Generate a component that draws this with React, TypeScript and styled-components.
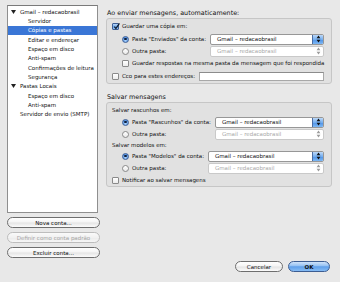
import React from 'react';
import styled, { createGlobalStyle, css } from 'styled-components';

const GlobalStyle = createGlobalStyle`
  html, body { margin: 0; padding: 0; background: #e8e8e8; }
  body { font-family: "DejaVu Sans", "Liberation Sans", sans-serif; }
`;

const Window = styled.div`
  width: 340px;
  height: 282px;
  display: flex;
  background: #e8e8e8;
  overflow: hidden;
  font-size: 5.5px;
  color: #111;
`;

const Sidebar = styled.div`
  width: 93px;
  margin-left: 7px;
  padding-top: 5px;
  display: flex;
  flex-direction: column;
  gap: 4px;
`;

const AccountList = styled.div`
  width: 91px;
  height: 208px;
  box-sizing: border-box;
  background: #fff;
  border: 1px solid #8f8f8f;
  border-top-color: #7a7a7a;
  padding-top: 1px;
`;

const TreeRow = styled.div<{ $level: number; $selected?: boolean; $toggle?: boolean }>`
  height: 9.33px;
  display: flex;
  align-items: center;
  gap: 4px;
  padding-left: ${(p) => (p.$level === 1 ? 20 : p.$toggle ? 3 : 12)}px;
  white-space: nowrap;
  color: ${(p) => (p.$selected ? '#fff' : '#111')};
  background: ${(p) => (p.$selected ? '#3a76d6' : 'transparent')};
`;

const PushButton = styled.div<{ $variant?: 'default' | 'disabled' | 'plain'; $w?: number }>`
  height: 11px;
  box-sizing: border-box;
  width: ${(p) => (p.$w ? `${p.$w}px` : '100%')};
  border-radius: 6px;
  display: flex;
  align-items: center;
  justify-content: center;
  font-size: 5.5px;
  white-space: nowrap;
  border: 1px solid #6e6e6e;
  background: linear-gradient(#ffffff, #f4f4f4 48%, #e4e4e4 52%, #fbfbfb);
  color: #111;
  ${(p) =>
    p.$variant === 'disabled' &&
    css`
      border-color: #bdbdbd;
      color: #a6a6a6;
      background: linear-gradient(#fafafa, #f1f1f1 50%, #ebebeb 52%, #f6f6f6);
    `}
  ${(p) =>
    p.$variant === 'default' &&
    css`
      border-color: #3c5d92;
      background: linear-gradient(#cfe3fa, #93c0f3 45%, #5f9fea 52%, #86bcf5);
      font-weight: bold;
    `}
`;

const Main = styled.div`
  width: 226px;
  margin-left: 6px;
  padding-top: 8px;
  display: flex;
  flex-direction: column;
`;

const SectionTitle = styled.div<{ $mt?: number }>`
  height: 10px;
  line-height: 10px;
  font-size: 6.4px;
  padding-left: 1px;
  margin-top: ${(p) => p.$mt ?? 0}px;
  white-space: nowrap;
`;

const Group = styled.div`
  box-sizing: border-box;
  border: 1px solid #c6c6c6;
  border-radius: 3px;
  background: #e1e1e1;
  padding: 2px 7px 1px 5px;
  display: flex;
  flex-direction: column;
`;

const Line = styled.div<{ $h: number; $indent?: number; $mt?: number }>`
  height: ${(p) => p.$h}px;
  margin-top: ${(p) => p.$mt ?? 0}px;
  padding-left: ${(p) => p.$indent ?? 0}px;
  display: flex;
  align-items: center;
  gap: 3px;
  white-space: nowrap;
`;

const ChoiceGrid = styled.div<{ $mt?: number }>`
  display: grid;
  grid-template-columns: auto 1fr;
  grid-auto-rows: 12px;
  column-gap: 4px;
  align-items: center;
  padding-left: 10px;
  margin-top: ${(p) => p.$mt ?? 0}px;
`;

const Choice = styled.label`
  display: flex;
  align-items: center;
  gap: 3px;
  white-space: nowrap;
`;

const Box = styled.span<{ $checked?: boolean }>`
  width: 7px;
  height: 7px;
  box-sizing: border-box;
  flex: none;
  border-radius: 1px;
  position: relative;
  border: 1px solid #8a8a8a;
  background: linear-gradient(#ffffff, #ececec);
  ${(p) =>
    p.$checked &&
    css`
      border-color: #3e5f95;
      background: linear-gradient(#b9d6f7, #6ea8ec 55%, #8cc0f6);
    `}
  svg { position: absolute; left: 0; top: -1px; overflow: visible; }
`;

const RadioDot = styled.span<{ $checked?: boolean }>`
  width: 7px;
  height: 7px;
  box-sizing: border-box;
  flex: none;
  border-radius: 50%;
  display: flex;
  align-items: center;
  justify-content: center;
  border: 1px solid #8a8a8a;
  background: linear-gradient(#ffffff, #e9e9e9);
  ${(p) =>
    p.$checked &&
    css`
      border-color: #3e5f95;
      background: radial-gradient(circle at 50% 70%, #a8d0fa, #5b98e6 70%);
      &::after {
        content: '';
        width: 2.4px;
        height: 2.4px;
        border-radius: 50%;
        background: #0e1f3c;
      }
    `}
`;

const Popup = styled.div<{ $disabled?: boolean }>`
  height: 11px;
  box-sizing: border-box;
  border: 1px solid ${(p) => (p.$disabled ? '#c9c9c9' : '#979797')};
  border-radius: 2px;
  background: #fff;
  display: flex;
  align-items: center;
  padding-left: 6px;
  overflow: hidden;
  white-space: nowrap;
  color: ${(p) => (p.$disabled ? '#a9a9a9' : '#111')};
`;

const Stepper = styled.span<{ $disabled?: boolean }>`
  margin-left: auto;
  width: 10px;
  align-self: stretch;
  display: flex;
  align-items: center;
  justify-content: center;
  border-left: 1px solid ${(p) => (p.$disabled ? 'transparent' : '#4a6da3')};
  background: ${(p) =>
    p.$disabled ? 'transparent' : 'linear-gradient(#bcd8f8, #74aeef 50%, #4f92e6 52%, #7db8f4)'};
`;

const TextInput = styled.div`
  flex: 1;
  height: 9px;
  box-sizing: border-box;
  margin-left: 1px;
  background: #fff;
  border: 1px solid #a8a8a8;
  border-top-color: #8c8c8c;
`;

const Footer = styled.div`
  margin-top: auto;
  padding-bottom: 10px;
  padding-right: 2px;
  display: flex;
  justify-content: flex-end;
  gap: 5px;
`;

const Triangle = () => (
  <svg width="5" height="4" viewBox="0 0 5 4">
    <path d="M0 0H5L2.5 4Z" fill="#222" />
  </svg>
);

const Check = () => (
  <svg width="7" height="7" viewBox="0 0 7 7">
    <path d="M1.3 3.6L2.9 5.5L6.4 0.3" fill="none" stroke="#0d1a2e" strokeWidth="1.3" />
  </svg>
);

const Arrows = ({ disabled }: { disabled?: boolean }) => (
  <svg width="5" height="8" viewBox="0 0 5 8">
    <path d="M2.5 0.6L4.4 3.2H0.6Z M0.6 4.8H4.4L2.5 7.4Z" fill={disabled ? '#9c9c9c' : '#111'} />
  </svg>
);

const Select = ({ disabled }: { disabled?: boolean }) => (
  <Popup $disabled={disabled}>
    Gmail – redacaobrasil
    <Stepper $disabled={disabled}>
      <Arrows disabled={disabled} />
    </Stepper>
  </Popup>
);

const tree: { label: string; level: number; toggle?: boolean; selected?: boolean }[] = [
  { label: 'Gmail – redacaobrasil', level: 0, toggle: true },
  { label: 'Servidor', level: 1 },
  { label: 'Cópias e pastas', level: 1, selected: true },
  { label: 'Editar e endereçar', level: 1 },
  { label: 'Espaço em disco', level: 1 },
  { label: 'Anti-spam', level: 1 },
  { label: 'Confirmações de leitura', level: 1 },
  { label: 'Segurança', level: 1 },
  { label: 'Pastas Locais', level: 0, toggle: true },
  { label: 'Espaço em disco', level: 1 },
  { label: 'Anti-spam', level: 1 },
  { label: 'Servidor de envio (SMTP)', level: 0 },
];

export default function App() {
  return (
    <Window>
      <GlobalStyle />
      <Sidebar>
        <AccountList>
          {tree.map((item, i) => (
            <TreeRow key={i} $level={item.level} $toggle={item.toggle} $selected={item.selected}>
              {item.toggle && <Triangle />}
              {item.label}
            </TreeRow>
          ))}
        </AccountList>
        <PushButton>Nova conta...</PushButton>
        <PushButton $variant="disabled">Definir como conta padrão</PushButton>
        <PushButton>Excluir conta...</PushButton>
      </Sidebar>

      <Main>
        <SectionTitle>Ao enviar mensagens, automaticamente:</SectionTitle>
        <Group>
          <Line $h={10}>
            <Box $checked>
              <Check />
            </Box>
            Guardar uma cópia em:
          </Line>
          <ChoiceGrid $mt={2}>
            <Choice>
              <RadioDot $checked />
              Pasta "Enviados" da conta:
            </Choice>
            <Select />
            <Choice>
              <RadioDot />
              Outra pasta:
            </Choice>
            <Select disabled />
          </ChoiceGrid>
          <Line $h={12} $indent={10}>
            <Box />
            Guardar respostas na mesma pasta da mensagem que foi respondida
          </Line>
          <Line $h={12} $mt={1}>
            <Box />
            Cco para estes endereços:
            <TextInput />
          </Line>
        </Group>

        <SectionTitle $mt={8}>Salvar mensagens</SectionTitle>
        <Group>
          <Line $h={9}>Salvar rascunhos em:</Line>
          <ChoiceGrid $mt={2}>
            <Choice>
              <RadioDot $checked />
              Pasta "Rascunhos" da conta:
            </Choice>
            <Select />
            <Choice>
              <RadioDot />
              Outra pasta:
            </Choice>
            <Select disabled />
          </ChoiceGrid>
          <Line $h={9}>Salvar modelos em:</Line>
          <ChoiceGrid $mt={1}>
            <Choice>
              <RadioDot $checked />
              Pasta "Modelos" da conta:
            </Choice>
            <Select />
            <Choice>
              <RadioDot />
              Outra pasta:
            </Choice>
            <Select disabled />
          </ChoiceGrid>
          <Line $h={10} $mt={1}>
            <Box />
            Notificar ao salvar mensagens
          </Line>
        </Group>

        <Footer>
          <PushButton $w={48}>Cancelar</PushButton>
          <PushButton $w={42} $variant="default">
            OK
          </PushButton>
        </Footer>
      </Main>
    </Window>
  );
}
